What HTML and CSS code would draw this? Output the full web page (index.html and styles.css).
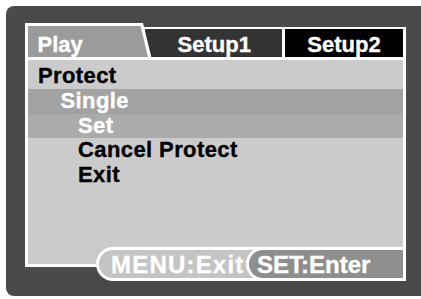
FILE: index.html
```html
<!DOCTYPE html>
<html>
<head>
<meta charset="utf-8">
<link rel="stylesheet" href="styles.css">
</head>
<body>
<div class="device">
  <div class="screen">
    <div class="tabs">
      <div class="tab tab-play">Play</div>
      <div class="tab tab-setup1">Setup1</div>
      <div class="tab tab-setup2">Setup2</div>
    </div>
    <div class="frame">
      <div class="menu">
        <div class="item item-top">Protect</div>
        <div class="item item-l1 band-1">Single</div>
        <div class="item item-l2 band-2">Set</div>
        <div class="item item-l2">Cancel Protect</div>
        <div class="item item-l2">Exit</div>
        <div class="bar">
          <div class="pill pill-menu">MENU:Exit</div>
          <div class="pill pill-set">SET:Enter</div>
        </div>
      </div>
    </div>
  </div>
</div>
</body>
</html>
```

FILE: styles.css
```css
* { box-sizing: border-box; }
html, body { margin: 0; padding: 0; background: #fff; }
body {
  width: 421px;
  height: 299px;
  overflow: hidden;
  font-family: "Liberation Sans", Arial, sans-serif;
  font-weight: bold;
}
.device {
  margin: 6px 0 0 6px;
  width: 415px;
  height: 290px;
  background: #4a4a4a;
  border-radius: 8px 0 0 8px;
  padding: 17px 0 0 19px;
}
.screen { width: 381px; }
.tabs {
  display: flex;
  height: 37px;
  background: #fff;
  clip-path: polygon(0 0, 118px 0, 119px 4px, 100% 4px, 100% 100%, 0 100%);
}
.tab {
  color: #fff;
  font-size: 22px;
  line-height: 24px;
  white-space: nowrap;
  -webkit-text-stroke: 0.35px #fff;
}
.tab-play {
  width: 120px;
  margin: 3px 0 3px 3px;
  background: #9b9b9b;
  clip-path: polygon(0 0, 112.5px 0, 100% 100%, 0 100%);
  padding: 7px 0 0 9.5px;
}
.tab-setup1 {
  width: 137.5px;
  margin: 6px 0 3px -3.5px;
  background: #333;
  clip-path: polygon(0 0, 100% 0, 100% 100%, 6.8px 100%);
  padding: 4px 0 0 2px;
  text-align: center;
}
.tab-setup2 {
  width: 118px;
  margin: 6px 3px 3px 3px;
  background: #000;
  padding-top: 4px;
  text-align: center;
}
.frame { background: #fff; padding: 0 3px 3px; }
.menu {
  height: 204px;
  background: #cbcbcb;
  display: flex;
  flex-direction: column;
}
.item {
  font-size: 22px;
  line-height: 24.5px;
  letter-spacing: 0.4px;
  color: #000;
  white-space: nowrap;
  -webkit-text-stroke: 0.35px currentColor;
}
.item-top { padding: 3.5px 0 1px 10px; }
.item-l1 { padding-left: 32.5px; }
.item-l2 { padding-left: 50px; }
.band-1 { background: #a2a2a2; color: #fff; }
.band-2 { background: #ababab; color: #fff; }
.bar {
  margin-top: auto;
  align-self: flex-end;
  margin-right: -3px;
  margin-bottom: -17px;
  width: 310px;
  height: 34px;
  background: #fff;
  border-radius: 17px 0 0 17px;
  padding: 3px;
  display: flex;
}
.pill {
  color: #fff;
  font-size: 24px;
  line-height: 27px;
  padding-top: 1px;
  white-space: nowrap;
  -webkit-text-stroke: 0.35px #fff;
}
.pill-menu {
  width: 162px;
  flex: none;
  background: #c4c4c4;
  border-radius: 14px 0 0 14px;
  padding-left: 12px;
  letter-spacing: 1.2px;
}
.pill-set {
  flex: 1;
  margin: -3px 0 -3px -15px;
  border: 3px solid #fff;
  border-right: 0;
  border-radius: 17px 0 0 17px;
  background: #8e8e8e;
  padding-left: 8px;
  letter-spacing: 0;
}
```
